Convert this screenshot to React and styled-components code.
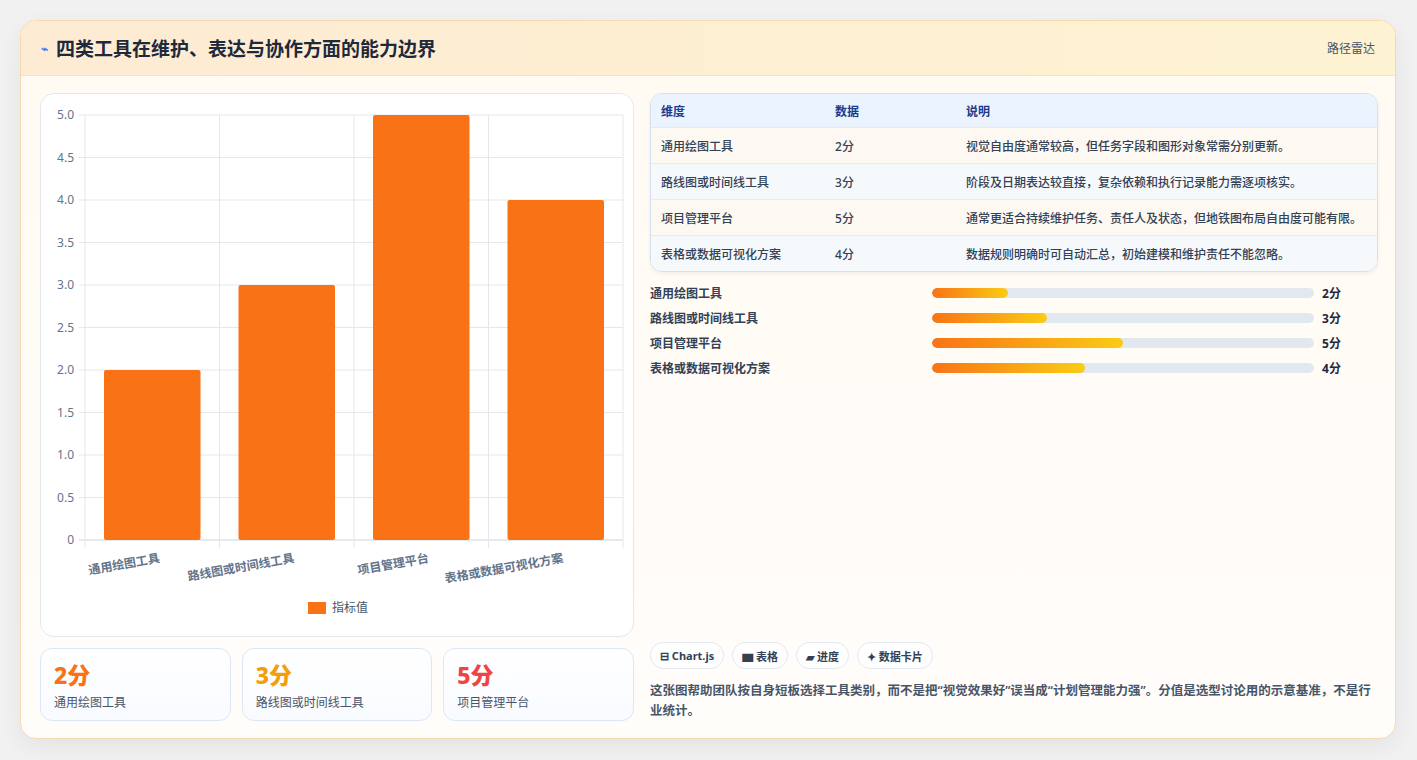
import React from "react";
import styled, { createGlobalStyle } from "styled-components";

const G = createGlobalStyle`
  body{margin:0;background:#f1f1f1;font-family:"Noto Sans","Noto Sans CJK SC",sans-serif;}
`;
const Page = styled.div`padding:20px 20px 20px 20px;`;
const Card = styled.div`
  width:1376px;height:719px;box-sizing:border-box;border:1px solid #f6d9b0;border-radius:16px;
  background:linear-gradient(180deg,#fffaf2,#fffdfa);overflow:hidden;display:flex;flex-direction:column;
  box-shadow:0 8px 24px rgba(0,0,0,.06);
`;
const Header = styled.div`
  height:54px;flex:none;display:flex;align-items:center;justify-content:space-between;padding:0 20px;
  background:linear-gradient(90deg,#fdebd3,#fdf3d2);border-bottom:1px solid #f3e3cc;
`;
const Title = styled.h1`margin:0;font-size:19px;font-weight:700;color:#1e293b;display:flex;align-items:center;gap:8px;`;
const Tag = styled.span`font-size:12px;color:#475569;`;
const Body = styled.div`flex:1;display:grid;grid-template-columns:594px 728px;gap:16px;padding:17px 18px 18px 19px;`;
const Left = styled.div`display:flex;flex-direction:column;gap:11px;`;
const ChartBox = styled.div`height:544px;box-sizing:border-box;background:#fff;border:1px solid #e2e8f0;border-radius:14px;`;
const Stats = styled.div`display:grid;grid-template-columns:repeat(3,1fr);gap:11px;`;
const Stat = styled.div`height:73px;box-sizing:border-box;border:1px solid #dbe7f5;border-radius:12px;background:linear-gradient(180deg,#fff,#f8fbff);padding:12px 13px;`;
const StatNum = styled.div`font-size:23px;font-weight:800;color:${p=>p.c};line-height:28px;`;
const StatLbl = styled.div`font-size:12px;color:#475569;margin-top:4px;`;
const Right = styled.div`display:flex;flex-direction:column;`;
const Table = styled.div`border:1px solid #d4e0ee;border-radius:12px;overflow:hidden;box-shadow:0 2px 4px rgba(0,0,0,.05);`;
const Row = styled.div`
  display:grid;grid-template-columns:174px 131px 1fr;align-items:center;padding-left:10px;
  height:${p=>p.h?33:35}px;font-size:12px;font-weight:${p=>p.h?700:500};
  color:${p=>p.h?"#1e3a8a":"#334155"};
  background:${p=>p.h?"#eaf3fe":p.alt?"#f6f9fc":"#fdf8f1"};
  border-top:${p=>p.h?"none":"1px solid #e5ebf2"};
`;
const Bars = styled.div`display:flex;flex-direction:column;gap:7px;margin-top:12px;`;
const BarRow = styled.div`display:grid;grid-template-columns:274px 382px 1fr;column-gap:8px;align-items:center;height:18px;font-size:12px;font-weight:600;color:#334155;`;
const Track = styled.div`height:10px;border-radius:5px;background:#e2e8f0;overflow:hidden;`;
const Fill = styled.div`height:100%;border-radius:5px;background:linear-gradient(90deg,#f97316,#facc15);`;
const Val = styled.span`font-weight:700;color:#1e293b;`;
const Spacer = styled.div`flex:1;`;
const Chips = styled.div`display:flex;gap:8px;`;
const Chip = styled.span`height:27px;box-sizing:border-box;padding:0 9px;border:1px solid #e2e8f0;border-radius:14px;background:#fff;font-size:11px;font-weight:700;color:#334155;display:flex;align-items:center;gap:3px;`;
const Note = styled.p`margin:12px 0 0;font-size:12.5px;line-height:20px;font-weight:600;color:#475569;`;

const data = [
  ["通用绘图工具", 2, "视觉自由度通常较高，但任务字段和图形对象常需分别更新。"],
  ["路线图或时间线工具", 3, "阶段及日期表达较直接，复杂依赖和执行记录能力需逐项核实。"],
  ["项目管理平台", 5, "通常更适合持续维护任务、责任人及状态，但地铁图布局自由度可能有限。"],
  ["表格或数据可视化方案", 4, "数据规则明确时可自动汇总，初始建模和维护责任不能忽略。"],
];

function Chart() {
  const x0 = 44, x1 = 582, y0 = 21, y1 = 446;
  const cw = (x1 - x0) / 4;
  const ticks = [0, .5, 1, 1.5, 2, 2.5, 3, 3.5, 4, 4.5, 5];
  const Y = v => y1 - (v / 5) * (y1 - y0);
  return (
    <svg width="592" height="542" style={{ display: "block" }} fontFamily="Noto Sans, Noto Sans CJK SC, sans-serif">
      {ticks.map(t => (
        <g key={t}>
          <line x1={x0 - 6} x2={x1} y1={Y(t)} y2={Y(t)} stroke={t === 0 ? "#cbd5e1" : "#e5e7eb"} />
          <text x={x0 - 11} y={Y(t) + 4} fontSize="12" fill="#64748b" textAnchor="end">{t === 0 ? "0" : t.toFixed(1)}</text>
        </g>
      ))}
      {[0, 1, 2, 3, 4].map(i => <line key={i} x1={x0 + i * cw} x2={x0 + i * cw} y1={y0} y2={y1 + 8} stroke="#e5e7eb" />)}
      {data.map((d, i) => {
        const bx = x0 + i * cw + 19, bw = cw - 38;
        return <rect key={i} x={bx} y={Y(d[1])} width={bw} height={y1 - Y(d[1])} rx="2" fill="#f97316" />;
      })}
      {data.map((d, i) => (
        <text key={i} x={x0 + i * cw + cw / 2 + 8} y={y1 + 22} fontSize="12" fontWeight="600" fill="#64748b" textAnchor="end"
          transform={`rotate(-10 ${x0 + i * cw + cw / 2 + 8} ${y1 + 22})`}>{d[0]}</text>
      ))}
      <rect x="267" y="508" width="18" height="12" fill="#f97316" />
      <text x="291" y="518" fontSize="12" fill="#475569">指标值</text>
    </svg>
  );
}

export default function App() {
  return (
    <Page>
      <G />
      <Card>
        <Header>
          <Title><span style={{ fontSize: 12, color: "#3b82f6" }}>⌁</span>四类工具在维护、表达与协作方面的能力边界</Title>
          <Tag>路径雷达</Tag>
        </Header>
        <Body>
          <Left>
            <ChartBox><Chart /></ChartBox>
            <Stats>
              <Stat><StatNum c="#f97316">2分</StatNum><StatLbl>通用绘图工具</StatLbl></Stat>
              <Stat><StatNum c="#f59e0b">3分</StatNum><StatLbl>路线图或时间线工具</StatLbl></Stat>
              <Stat><StatNum c="#ef4444">5分</StatNum><StatLbl>项目管理平台</StatLbl></Stat>
            </Stats>
          </Left>
          <Right>
            <Table>
              <Row h><span>维度</span><span>数据</span><span>说明</span></Row>
              {data.map((d, i) => (
                <Row key={i} alt={i % 2 === 1}><span>{d[0]}</span><span>{d[1]}分</span><span>{d[2]}</span></Row>
              ))}
            </Table>
            <Bars>
              {data.map((d, i) => (
                <BarRow key={i}><span>{d[0]}</span><Track><Fill style={{ width: `${d[1] * 10 + (d[1] === 2 ? 0 : 0)}%` }} /></Track><Val>{d[1]}分</Val></BarRow>
              ))}
            </Bars>
            <Spacer />
            <Chips>
              <Chip>⊟ Chart.js</Chip><Chip>▆ 表格</Chip><Chip>▰ 进度</Chip><Chip>✦ 数据卡片</Chip>
            </Chips>
            <Note>这张图帮助团队按自身短板选择工具类别，而不是把“视觉效果好”误当成“计划管理能力强”。分值是选型讨论用的示意基准，不是行业统计。</Note>
          </Right>
        </Body>
      </Card>
    </Page>
  );
}
